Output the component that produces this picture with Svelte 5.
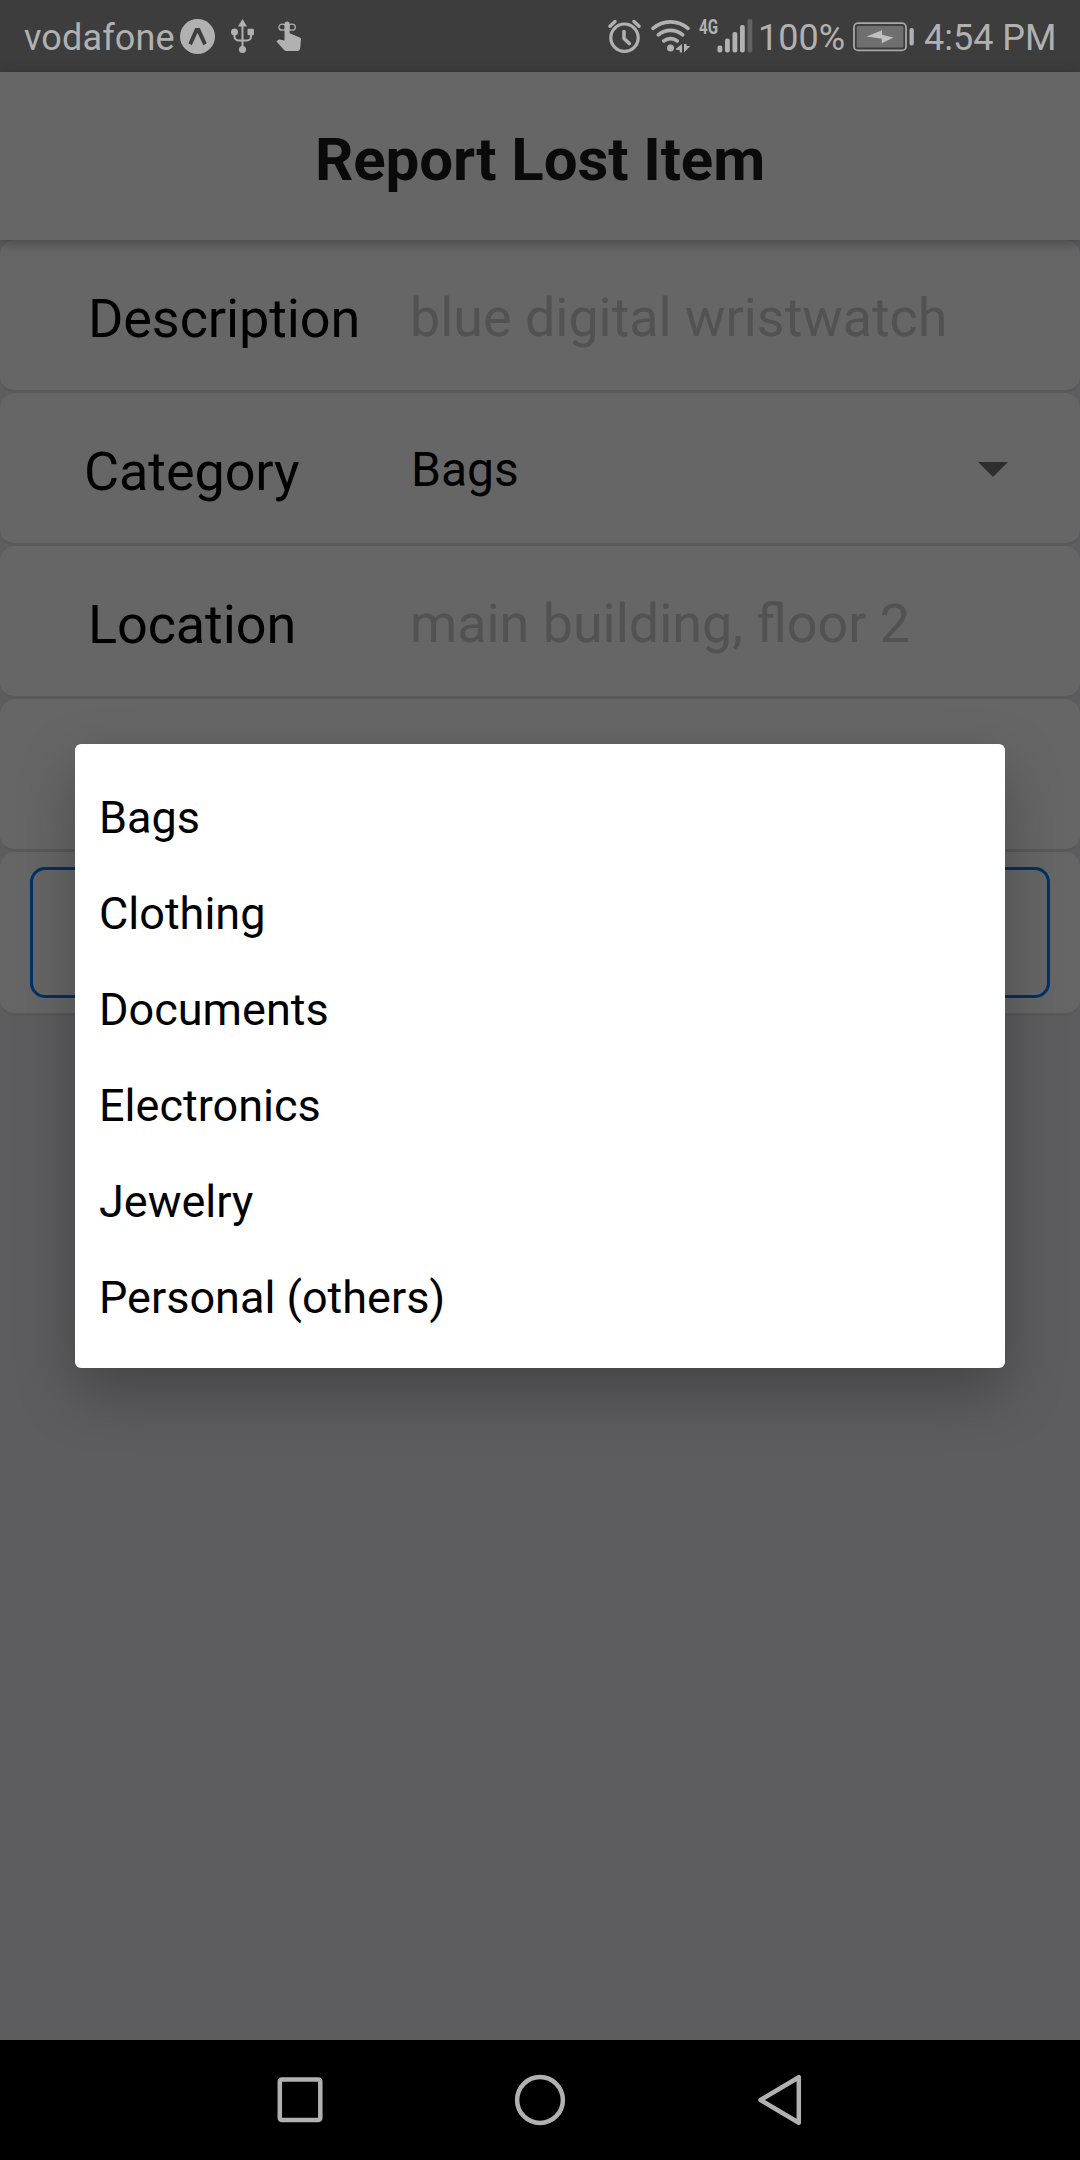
<script>
  const categories = ['Bags', 'Clothing', 'Documents', 'Electronics', 'Jewelry', 'Personal (others)'];
</script>

<div class="screen">
  <div class="status">
    <span class="carrier">vodafone</span>
    <svg class="expo" width="36" height="36" viewBox="0 0 36 36">
      <circle cx="17.5" cy="17.5" r="17.5" fill="#b1b1b1" />
      <path d="M15.2 9h4.6L26.7 24.3l-3.3 2L17.5 13.8 11.8 26.3l-3.3-2z" fill="#3d3d3d" />
    </svg>
    <svg class="usb" width="24" height="36" viewBox="0 0 24 36">
      <g fill="none" stroke="#b1b1b1" stroke-width="2">
        <path d="M11.5 6v24M3.5 14v4.5a4 4 0 0 0 4 4h8.500a4 4 0 0 0 4-4V14" />
      </g>
      <g fill="#b1b1b1">
        <path d="M11.5 1l4.5 7.500H7z" />
        <circle cx="3.5" cy="14" r="3.5" />
        <rect x="16.5" y="10.8" width="6.4" height="6.4" rx="1" />
        <circle cx="11.5" cy="31.5" r="3.6" />
      </g>
    </svg>
    <svg class="touch" width="26" height="32" viewBox="0 0 26 32">
      <path d="M8.5 4.2a2.6 2.6 0 0 1 5.2 0v9l10.1 4.3a1.9 1.9 0 0 1 1.2 1.9l-.8 8.6a3.3 3.3 0 0 1-3.2 3H10.5a3.4 3.4 0 0 1-2.4-1L.5 21.6l1.2-1.4a2.3 2.3 0 0 1 2-.6l4.8.9z" fill="#b1b1b1" />
      <ellipse cx="6.3" cy="7.2" rx="3.4" ry="3" fill="none" stroke="#b1b1b1" stroke-width="1.3" />
      <ellipse cx="15.9" cy="7.2" rx="3.4" ry="3" fill="none" stroke="#b1b1b1" stroke-width="1.3" />
    </svg>

    <svg class="alarm" width="34" height="34" viewBox="0 0 34 34">
      <g fill="none" stroke="#b1b1b1">
        <circle cx="16.5" cy="18.7" r="13.7" stroke-width="3.2" />
        <path d="M16 12.5v7l5.3 5" stroke-width="3.6" stroke-linecap="round" stroke-linejoin="round" />
        <path d="M2 7.3l5-4.8M31 7.3l-5-4.8" stroke-width="3.4" stroke-linecap="round" />
      </g>
    </svg>
    <svg class="wifi" width="40" height="34" viewBox="0 0 40 34">
      <g fill="none" stroke="#b1b1b1" stroke-width="3.6" stroke-linecap="round">
        <path d="M2 9.3a27 27 0 0 1 35 0" />
        <path d="M7.3 15.8a19 19 0 0 1 24.4 0" />
        <path d="M12.7 22a11 11 0 0 1 13.6 0" />
      </g>
      <g fill="#b1b1b1">
        <circle cx="19.5" cy="29" r="3.5" />
        <path d="M31 25v8.500h-2.300V31h-3.500v-1.500zM33 25v8.500l6.300-6.500h-3.800V25z" />
      </g>
    </svg>
    <svg class="signal" width="56" height="44" viewBox="0 -8 56 44">
      <text x="0" y="15" textLength="19" lengthAdjust="spacingAndGlyphs" font-size="20" font-weight="700" fill="#b1b1b1">4G</text>
      <g fill="#b1b1b1">
        <rect x="18.5" y="26.5" width="4.8" height="7" rx="2" />
        <rect x="26" y="19.5" width="4.8" height="14" rx="2" />
        <rect x="33.5" y="13" width="4.8" height="20.5" rx="2" />
        <rect x="41" y="6" width="4.8" height="27.5" rx="2" />
      </g>
      <rect x="48.5" y="0" width="4.8" height="33.5" rx="2" fill="#626262" />
    </svg>
    <span class="percent">100%</span>
    <svg class="battery" width="62" height="30" viewBox="0 0 62 30">
      <rect x="1" y="1.2" width="52" height="27.2" rx="4" fill="none" stroke="#a8a8a8" stroke-width="1.8" />
      <rect x="3.7" y="4" width="46.7" height="21.5" rx="1.5" fill="#6f6f6f" />
      <rect x="56.5" y="6" width="4.3" height="17.5" rx="2" fill="#b1b1b1" />
      <path d="M13.5 14.5L29 8.3v4.5l11.5 2.7L28.8 21.3v-4.6z" fill="#c0c0c0" />
    </svg>
    <span class="time">4:54 PM</span>
  </div>

  <header><h1>Report Lost Item</h1></header>

  <main>
    <div class="row">
      <span class="label">Description</span>
      <span class="value hint">blue digital wristwatch</span>
    </div>
    <div class="row">
      <span class="label wide">Category</span>
      <span class="value picked">Bags</span>
      <svg class="caret" width="30" height="15" viewBox="0 0 30 15"><path d="M0 0h30L15 15z" fill="#2e2e2e" /></svg>
    </div>
    <div class="row">
      <span class="label">Location</span>
      <span class="value hint">main building, floor 2</span>
    </div>
    <div class="row"></div>
    <div class="row action"><div class="button"></div></div>
  </main>

  <nav>
    <svg width="240" height="120" viewBox="0 0 240 120"><rect x="39.8" y="39.6" width="40.5" height="40.5" rx="2" /></svg>
    <svg width="240" height="120" viewBox="0 0 240 120"><circle cx="60" cy="60" r="22.9" /></svg>
    <svg width="240" height="120" viewBox="0 0 240 120"><path d="M78.8 37.2v45.6L40.5 60z" /></svg>
  </nav>

  <div class="dialog">
    {#each categories as category}
      <div class="option">{category}</div>
    {/each}
  </div>
</div>

<style>
  :global(body) {
    margin: 0;
    background: #5d5d5f;
  }
  .screen {
    position: relative;
    display: flex;
    flex-direction: column;
    width: 1080px;
    height: 2160px;
    overflow: hidden;
    background: #5d5d5f;
    font-family: Roboto, sans-serif;
    white-space: nowrap;
  }
  svg {
    display: block;
    flex: none;
  }
  .status {
    display: flex;
    flex: none;
    box-sizing: border-box;
    height: 72px;
    padding: 0 23px 0 24px;
    background: #3d3d3d;
    color: #b1b1b1;
    font-size: 36px;
    line-height: 76px;
  }
  .carrier {
    width: 156px;
    letter-spacing: 0.15px;
  }
  .expo { margin-top: 19px; }
  .usb { margin: 18px 0 0 15px; }
  .touch { margin: 20px 0 0 21px; }
  .alarm { margin: 19px 0 0 auto; }
  .wifi { margin: 19px 0 0 9px; }
  .signal { margin: 11px 0 0 8px; }
  .percent { width: 95px; margin-left: 3px; }
  .battery { margin-top: 22px; }
  .time { width: 133px; margin-left: 9px; }
  header {
    position: relative;
    z-index: 1;
    flex: none;
    height: 168px;
    background: #666;
    box-shadow: 0 3px 12px rgba(0, 0, 0, 0.3);
    text-align: center;
  }
  h1 {
    margin: 0;
    color: #0a0a0a;
    font-size: 60px;
    font-weight: 700;
    letter-spacing: -0.1px;
    line-height: 175px;
  }
  main {
    flex: 1;
  }
  .row {
    display: flex;
    box-sizing: border-box;
    height: 153px;
    padding: 0 72px 0 88px;
    border-bottom: 3px solid #595959;
    border-radius: 15px;
    background: #666;
    background-clip: padding-box;
    color: #000;
    font-size: 54px;
    line-height: 157px;
  }
  .label {
    width: 322px;
    letter-spacing: -0.1px;
  }
  .wide { width: 326px; margin-left: -4px; }
  .value { flex: 1; }
  .hint {
    color: #525252;
    font-size: 53.85px;
    line-height: 155px;
  }
  .picked {
    padding-left: 1px;
    font-size: 48px;
    line-height: 153px;
  }
  .caret { margin-top: 69px; }
  .action {
    height: 164px;
    padding: 15px 30px;
  }
  .button {
    box-sizing: border-box;
    width: 100%;
    height: 131px;
    border: 3px solid #003166;
    border-radius: 15px;
  }
  nav {
    display: flex;
    flex: none;
    height: 120px;
    padding-left: 240px;
    background: #000;
  }
  nav svg {
    fill: none;
    stroke: #b1b1b1;
    stroke-width: 4.5;
    stroke-linejoin: round;
  }
  .dialog {
    position: absolute;
    z-index: 2;
    top: 744px;
    left: 75px;
    box-sizing: border-box;
    width: 930px;
    height: 624px;
    padding: 24px;
    border-radius: 6px;
    background: #fff;
    box-shadow: 0 24px 60px rgba(0, 0, 0, 0.27);
    color: #000;
  }
  .option {
    height: 96px;
    font-size: 45px;
    line-height: 99px;
  }
</style>
